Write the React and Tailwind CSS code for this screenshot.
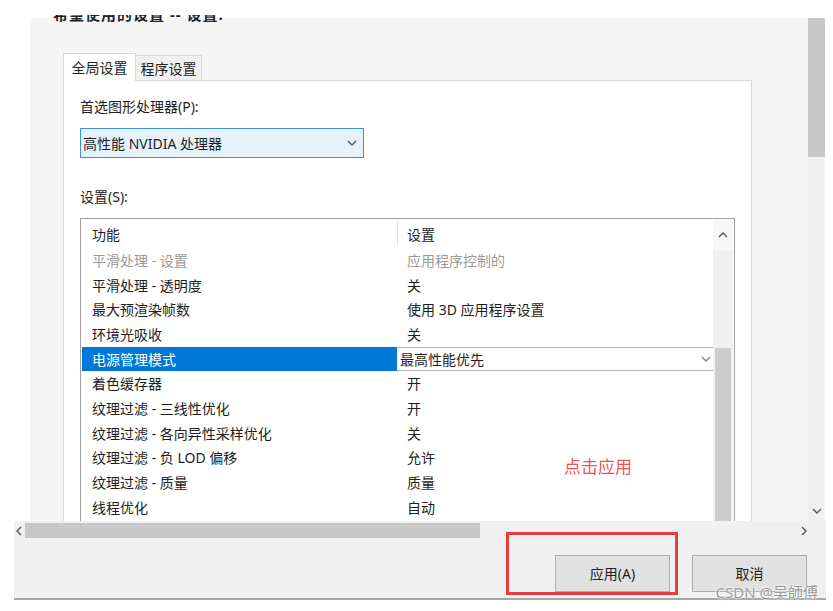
import React from 'react';

const FONT = { fontFamily: '"Noto Sans", "Noto Sans CJK SC", sans-serif' };

const rows = [
    { name: '平滑处理 - 设置', value: '应用程序控制的', muted: true },
    { name: '平滑处理 - 透明度', value: '关' },
    { name: '最大预渲染帧数', value: '使用 3D 应用程序设置' },
    { name: '环境光吸收', value: '关' },
    { name: '电源管理模式', value: '最高性能优先', selected: true },
    { name: '着色缓存器', value: '开' },
    { name: '纹理过滤 - 三线性优化', value: '开' },
    { name: '纹理过滤 - 各向异性采样优化', value: '关' },
    { name: '纹理过滤 - 负 LOD 偏移', value: '允许' },
    { name: '纹理过滤 - 质量', value: '质量' },
    { name: '线程优化', value: '自动' },
];

function Chevron({ dir = 'down', className = '' }) {
    const pts = {
        down: '1,3 5,7 9,3',
        up: '1,7 5,3 9,7',
        left: '7,1 3,5 7,9',
        right: '3,1 7,5 3,9',
    }[dir];
    return (
        <svg width="10" height="10" viewBox="0 0 10 10" className={className}>
            <polyline points={pts} fill="none" stroke="currentColor" strokeWidth="1.4" />
        </svg>
    );
}

function SettingsTable() {
    return (
        <div className="w-[655px] h-[310px] border border-[#a0a0a0] p-px flex bg-white">
            <div className="flex-1 flex flex-col text-[14px] text-[#1e1e1e]">
                <div className="h-[28px] flex items-center shrink-0">
                    <div className="w-[315px] pl-[10px]">功能</div>
                    <div className="h-[24px] w-px bg-[#e5e5e5]" />
                    <div className="pl-[9px]">设置</div>
                </div>
                {rows.map((r) => (
                    <div key={r.name} className="h-[24.7px] flex items-center shrink-0">
                        <div
                            className={
                                r.selected
                                    ? 'w-[315px] h-full flex items-center pl-[10px] bg-[#0078d7] text-white'
                                    : r.muted
                                    ? 'w-[315px] pl-[10px] text-[#9a9a9a]'
                                    : 'w-[315px] pl-[10px]'
                            }
                        >
                            {r.name}
                        </div>
                        {r.selected ? (
                            <div className="flex-1 h-full flex items-center justify-between pl-[3px] pr-[2px] border-y border-[#b5b5b5]">
                                <span>{r.value}</span>
                                <Chevron className="text-[#888]" />
                            </div>
                        ) : (
                            <div className={r.muted ? 'pl-[10px] text-[#9a9a9a]' : 'pl-[10px]'}>{r.value}</div>
                        )}
                    </div>
                ))}
            </div>
            <div className="w-[20px] flex flex-col bg-[#f0f0f0]">
                <div className="h-[30px] flex items-center justify-center bg-[#f7f7f7] text-[#555]">
                    <Chevron dir="up" />
                </div>
                <div className="h-[98px]" />
                <div className="mx-[2px] flex-1 bg-[#cdcdcd]" />
            </div>
        </div>
    );
}

export default function App() {
    return (
        <div className="relative w-[833px] h-[611px] bg-white overflow-hidden flex flex-col pt-[18px]" style={FONT}>
            <div className="flex h-[503px] shrink-0">
                <div className="w-[30px] shrink-0" />
                <div className="w-[778px] shrink-0 bg-[#f5f5f5] flex flex-col">
                    <div className="-mt-[3px] h-[7px] overflow-hidden pl-[23px]">
                        <div className="-mt-[8px] leading-[15px] text-[15px] font-bold tracking-[1px] text-[#222]">希望使用的设置 -- 设置:</div>
                    </div>
                    <div className="mt-[31px] ml-[33px] flex items-end text-[14px] text-[#1e1e1e]">
                        <div className="relative z-10 h-[28px] w-[73px] -mb-px border border-b-0 border-[#d9d9d9] bg-white flex items-center justify-center">
                            全局设置
                        </div>
                        <div className="h-[25px] w-[66px] border border-l-0 border-b-0 border-[#d9d9d9] bg-[#f0f0f0] flex items-center justify-center">
                            程序设置
                        </div>
                    </div>
                    <div className="ml-[33px] w-[689px] flex-1 min-h-0 overflow-hidden border border-[#d9d9d9] border-b-0 bg-white pl-[16px] text-[14px] text-[#1e1e1e]">
                        <div className="mt-[16px] leading-[20px]">首选图形处理器(P):</div>
                        <div className="mt-[11px] w-[284px] h-[30px] border border-[#3c8fdc] bg-[#e5f1fb] flex items-center justify-between pl-[2px] pr-[6px]">
                            <span>高性能 NVIDIA 处理器</span>
                            <Chevron className="text-[#555]" />
                        </div>
                        <div className="mt-[29px] leading-[20px]">设置(S):</div>
                        <div className="mt-[11px]">
                            <SettingsTable />
                        </div>
                    </div>
                </div>
                <div className="w-[17px] shrink-0 flex flex-col bg-[#f0f0f0]">
                    <div className="h-[139px] bg-[#c8c8c8]" />
                    <div className="flex-1" />
                    <div className="h-[20px] flex items-center justify-center text-[#555]">
                        <Chevron dir="down" />
                    </div>
                </div>
            </div>
            <div className="ml-[14px] w-[812px] h-[19px] shrink-0 flex bg-[#f0f0f0]">
                <div className="w-[11px] flex items-center text-[#555]">
                    <Chevron dir="left" />
                </div>
                <div className="w-[455px] my-[2px] bg-[#c8c8c8]" />
                <div className="flex-1" />
                <div className="w-[24px] mr-[10px] flex items-center justify-center text-[#555]">
                    <Chevron dir="right" />
                </div>
            </div>
            <div className="ml-[14px] w-[812px] h-[60px] shrink-0 bg-[#f0f0f0] border-b-2 border-[#a8a8a8] flex justify-end gap-[22px] pt-[15px] pr-[19px] text-[14px] text-[#1e1e1e]">
                <button className="w-[115px] h-[37px] bg-[#e1e1e1] border border-[#adadad]">应用(A)</button>
                <button className="w-[115px] h-[37px] bg-[#e1e1e1] border border-[#adadad]">取消</button>
            </div>

            <div className="absolute left-[506px] top-[532px] w-[172px] h-[63px] border-[3px] border-[#e53e3e]" />
            <div className="absolute left-[564px] top-[454px] text-[17px] text-[#ec5454]">点击应用</div>
            <div
                className="absolute right-[15px] top-[581px] text-[15px] text-[#9a9a9a]"
                style={{ textShadow: '0 0 2px #fff, 0 0 2px #fff' }}
            >
                CSDN @吴師傅
            </div>
        </div>
    );
}
